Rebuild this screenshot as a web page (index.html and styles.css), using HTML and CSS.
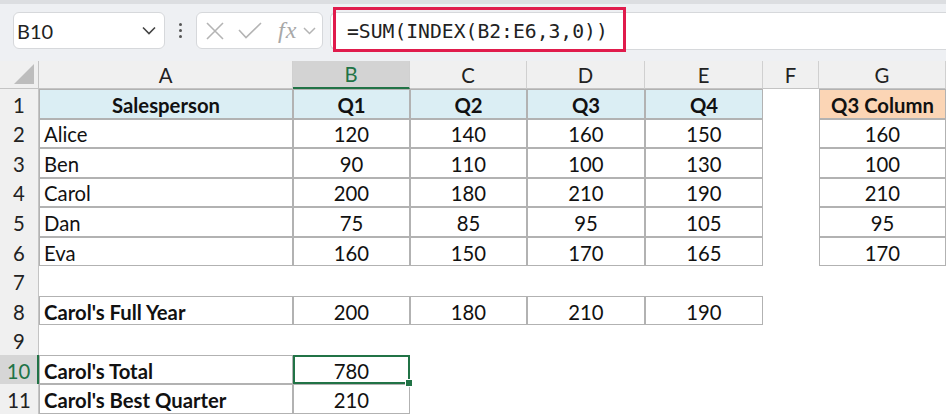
FILE: index.html
```html
<!DOCTYPE html>
<html lang="en">
<head>
    <meta charset="UTF-8">
    <title>INDEX SUM</title>
    <link rel="stylesheet" href="styles.css">
</head>
<body>
    <div class="toolbar">
        <div class="namebox">
            <span>B10</span>
            <svg width="14" height="9" viewBox="0 0 14 9"><polyline points="1,1.5 7,7.5 13,1.5" fill="none" stroke="#444" stroke-width="1.6"/></svg>
        </div>
        <div class="dots"><i></i><i></i><i></i></div>
        <div class="fnbox">
            <svg width="18" height="18" viewBox="0 0 18 18"><path d="M1 1 L17 17 M17 1 L1 17" stroke="#b4b4b4" stroke-width="1.6"/></svg>
            <svg width="24" height="17" viewBox="0 0 24 17"><polyline points="1,8 8,15.5 23,1" fill="none" stroke="#b4b4b4" stroke-width="1.6"/></svg>
            <span class="fx">fx</span>
            <svg width="13" height="8" viewBox="0 0 13 8"><polyline points="1,1 6.5,6.5 12,1" fill="none" stroke="#b4b4b4" stroke-width="1.5"/></svg>
        </div>
        <div class="formula">
            <span>=SUM(INDEX(B2:E6,3,0))</span>
            <div class="mark"></div>
        </div>
    </div>

    <div class="sheet">
        <div class="corner"><svg width="20" height="20" viewBox="0 0 20 20"><polygon points="20,0 20,20 0,20" fill="#bdbdbd"/></svg></div>
        <div class="ch">A</div>
        <div class="ch sel">B</div>
        <div class="ch">C</div>
        <div class="ch">D</div>
        <div class="ch">E</div>
        <div class="ch">F</div>
        <div class="ch">G</div>

        <div class="rh">1</div>
        <div class="c b hd">Salesperson</div>
        <div class="c b hd">Q1</div>
        <div class="c b hd">Q2</div>
        <div class="c b hd">Q3</div>
        <div class="c b hd">Q4</div>
        <div class="c"></div>
        <div class="c b hd pk">Q3 Column</div>

        <div class="rh">2</div>
        <div class="c b txt">Alice</div>
        <div class="c b">120</div>
        <div class="c b">140</div>
        <div class="c b">160</div>
        <div class="c b">150</div>
        <div class="c"></div>
        <div class="c b">160</div>

        <div class="rh">3</div>
        <div class="c b txt">Ben</div>
        <div class="c b">90</div>
        <div class="c b">110</div>
        <div class="c b">100</div>
        <div class="c b">130</div>
        <div class="c"></div>
        <div class="c b">100</div>

        <div class="rh">4</div>
        <div class="c b txt">Carol</div>
        <div class="c b">200</div>
        <div class="c b">180</div>
        <div class="c b">210</div>
        <div class="c b">190</div>
        <div class="c"></div>
        <div class="c b">210</div>

        <div class="rh">5</div>
        <div class="c b txt">Dan</div>
        <div class="c b">75</div>
        <div class="c b">85</div>
        <div class="c b">95</div>
        <div class="c b">105</div>
        <div class="c"></div>
        <div class="c b">95</div>

        <div class="rh">6</div>
        <div class="c b txt">Eva</div>
        <div class="c b">160</div>
        <div class="c b">150</div>
        <div class="c b">170</div>
        <div class="c b">165</div>
        <div class="c"></div>
        <div class="c b">170</div>

        <div class="rh">7</div>
        <div class="c"></div><div class="c"></div><div class="c"></div><div class="c"></div>
        <div class="c"></div><div class="c"></div><div class="c"></div>

        <div class="rh">8</div>
        <div class="c b txt bold">Carol's Full Year</div>
        <div class="c b">200</div>
        <div class="c b">180</div>
        <div class="c b">210</div>
        <div class="c b">190</div>
        <div class="c"></div>
        <div class="c"></div>

        <div class="rh">9</div>
        <div class="c"></div><div class="c"></div><div class="c"></div><div class="c"></div>
        <div class="c"></div><div class="c"></div><div class="c"></div>

        <div class="rh sel">10</div>
        <div class="c b txt bold">Carol's Total</div>
        <div class="c b active">780<span class="handle"></span></div>
        <div class="c"></div><div class="c"></div><div class="c"></div>
        <div class="c"></div><div class="c"></div>

        <div class="rh">11</div>
        <div class="c b txt bold">Carol's Best Quarter</div>
        <div class="c b">210</div>
        <div class="c"></div><div class="c"></div><div class="c"></div>
        <div class="c"></div><div class="c"></div>
    </div>
</body>
</html>
```

FILE: styles.css
```css
* {
    box-sizing: border-box;
}
body {
    margin: 0;
    width: 946px;
    height: 416px;
    overflow: hidden;
    font-family: Lato, "Open Sans", sans-serif;
    color: #111;
    background: #fff;
}

/* formula bar */
.toolbar {
    height: 61px;
    background: #eef0f3;
    border-top: 4px solid #dcdee1;
    display: flex;
    align-items: flex-start;
    padding-top: 8px;
    padding-left: 13px;
}
.namebox {
    width: 152px;
    height: 37px;
    background: #fff;
    border: 1px solid #d6d8db;
    border-radius: 6px;
    display: flex;
    align-items: center;
    justify-content: space-between;
    padding: 0 8px 0 3px;
    font-size: 20px;
    color: #222;
}
.dots {
    width: 31px;
    height: 37px;
    display: flex;
    flex-direction: column;
    align-items: center;
    justify-content: center;
    gap: 3px;
}
.dots i {
    width: 3px;
    height: 3px;
    background: #555;
    border-radius: 50%;
}
.fnbox {
    width: 127px;
    height: 37px;
    background: #fff;
    border: 1px solid #d6d8db;
    border-radius: 6px;
    display: flex;
    align-items: center;
    padding: 0 4px 0 9px;
    gap: 14px;
}
.fnbox .fx {
    font-family: "Liberation Serif", serif;
    font-style: italic;
    font-size: 24px;
    color: #a8a8a8;
    margin-left: 2px;
    margin-right: -8px;
    letter-spacing: 1px;
}
.formula {
    position: relative;
    flex: 1;
    margin-left: 7px;
    height: 38px;
    background: #fff;
    border: 1px solid #d6d8db;
    border-right: none;
    border-radius: 6px 0 0 6px;
    display: flex;
    align-items: center;
    padding-left: 16px;
    font-family: "DejaVu Sans Mono", monospace;
    font-size: 19.7px;
    color: #222;
}
.mark {
    position: absolute;
    left: 2px;
    top: -6px;
    width: 293px;
    height: 45px;
    border: 3px solid #e01b4c;
}

/* grid */
.sheet {
    display: grid;
    grid-template-columns: 39px 254px 117px 117px 118px 118px 56px 127px;
    grid-template-rows: 28px repeat(11, 29.55px);
    font-size: 20.3px;
}
.corner {
    background: #f0f0f0;
    border-right: 1px solid #c4c4c4;
    border-bottom: 1px solid #c4c4c4;
    display: flex;
    align-items: flex-end;
    justify-content: flex-end;
    padding: 0 4px 4px 0;
}
.ch {
    background: #f0f0f0;
    border-right: 1px solid #d0d0d0;
    border-bottom: 1px solid #c4c4c4;
    display: flex;
    align-items: center;
    justify-content: center;
    color: #222;
}
.ch.sel {
    background: #d3d3d3;
    color: #217346;
    border-bottom: 2px solid #217346;
}
.rh {
    background: #f0f0f0;
    border-right: 1px solid #c4c4c4;
    display: flex;
    align-items: center;
    justify-content: center;
    padding-top: 2px;
    color: #222;
}
.rh.sel {
    background: #d6d6d6;
    color: #217346;
    border-right: 2px solid #217346;
}
.c {
    display: flex;
    align-items: center;
    justify-content: center;
    padding-top: 2px;
    white-space: nowrap;
}
.b {
    border: 1px solid #b2b2b2;
}
.hd {
    background: #dbeef4;
    font-weight: bold;
}
.pk {
    background: #fbd5b5;
}
.txt {
    justify-content: flex-start;
    padding-left: 4px;
}
.bold {
    font-weight: bold;
}
.active {
    position: relative;
    border: 2px solid #217346;
}
.handle {
    position: absolute;
    right: -5px;
    bottom: -5px;
    width: 8px;
    height: 8px;
    background: #217346;
    border: 1px solid #fff;
}
```
